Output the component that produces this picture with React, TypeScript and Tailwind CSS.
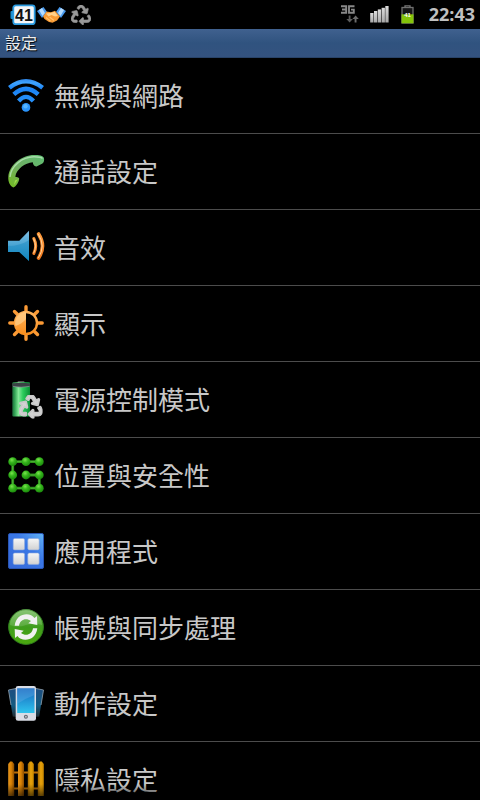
import type { ReactNode } from "react";
import { FaRecycle } from "react-icons/fa";

const FONT = "font-['Roboto','Noto_Sans_CJK_TC',sans-serif]";

function Gradient({ id, from, to }: { id: string; from: string; to: string }) {
  return (
    <linearGradient id={id} x1="0" y1="0" x2="0" y2="1">
      <stop offset="0" stopColor={from} />
      <stop offset="1" stopColor={to} />
    </linearGradient>
  );
}

function RowIcon({ children }: { children: ReactNode }) {
  return (
    <svg viewBox="0 0 36 36" className="size-9 shrink-0 overflow-visible" aria-hidden="true">
      {children}
    </svg>
  );
}

function WifiIcon() {
  return (
    <RowIcon>
      <defs>
        <linearGradient id="wifi" gradientUnits="userSpaceOnUse" x1="0" y1="2" x2="0" y2="35">
          <stop offset="0" stopColor="#2f86ea" />
          <stop offset="0.12" stopColor="#3fa4ff" />
          <stop offset="0.3" stopColor="#1b83f5" />
          <stop offset="1" stopColor="#2f9cff" />
        </linearGradient>
      </defs>
      <g fill="none" stroke="url(#wifi)" strokeWidth="4.4">
        <path d="M1.4 10.8Q18-2.2 34.6 10.8" />
        <path d="M5.8 17.4Q18 6.4 30.2 17.4" />
        <path d="M10.600 24Q18 15.800 25.400 24" />
      </g>
      <circle cx="18" cy="30.4" r="4.300" fill="#2a94fb" />
      <circle cx="17.5" cy="29.3" r="2.2" fill="#55b4ff" />
    </RowIcon>
  );
}

function PhoneIcon() {
  return (
    <RowIcon>
      <defs>
        <linearGradient id="call" x1="1" y1="0" x2="0" y2="1">
          <stop offset="0" stopColor="#5fbd72" />
          <stop offset="0.55" stopColor="#6fae63" />
          <stop offset="1" stopColor="#74bd1e" />
        </linearGradient>
      </defs>
      <path
        d="M5.3 34.5C2 33 0 29 .3 24C1 12 14 2 26 2C31 2 35 2.5 36 5C36.5 8 35.5 10 34 10.8L28.500 13.400C26 13.600 25 11.500 24.800 9.300C17 10 8.500 16 7.300 23.700C8.500 24 10.800 24 11.200 25.500C11.400 28 8 34 5.300 34.500Z"
        fill="url(#call)"
      />
      <path d="M2 24C3 13 14 4 26 3.800C30 3.800 33 4 34.500 5.500" fill="none" stroke="#b9e6ba" strokeWidth="1.4" opacity="0.8" />
      <path d="M7 27.500L9.800 26.200L6 32" fill="#a3e045" />
    </RowIcon>
  );
}

function SoundIcon() {
  return (
    <RowIcon>
      <defs>
        <Gradient id="speaker" from="#7fc0e6" to="#0f86bd" />
        <Gradient id="waves" from="#ff9a3c" to="#f07a20" />
      </defs>
      <path d="M0 11.700H11.300L21 1.700V32L11.300 23H0Z" fill="url(#speaker)" />
      <path d="M0 17C8 17 15 15 21 11V32L11.300 23H0Z" fill="#1687c0" opacity="0.45" />
      <g fill="none" strokeLinecap="round">
        <path d="M25.800 9.500Q29.600 17 25.800 24.500" stroke="url(#waves)" strokeWidth="3" />
        <path d="M30.600 5Q38.400 17 30.600 29" stroke="url(#waves)" strokeWidth="3.600" />
        <path d="M25.800 10Q29.200 17 25.800 24M30.600 5.500Q37.900 17 30.600 28.500" stroke="#ffd39a" strokeWidth="1" />
      </g>
    </RowIcon>
  );
}

function DisplayIcon() {
  return (
    <RowIcon>
      <defs>
        <Gradient id="sun" from="#ffb45c" to="#f98f1f" />
      </defs>
      <g stroke="#fb9a35" strokeWidth="3.4" strokeLinecap="round">
        <path d="M18 1.800V6M18 30V34.200M1.800 18H6M30 18H34.200M6.500 6.500L9.300 9.300M26.700 26.700L29.500 29.500M6.500 29.500L9.300 26.700M26.700 9.300L29.500 6.500" />
      </g>
      <circle cx="18" cy="18" r="11" fill="#000" stroke="url(#sun)" strokeWidth="2.4" />
      <path d="M18 7A11 11 0 0 0 18 29Z" fill="url(#sun)" />
      <path d="M18 7A11 11 0 0 0 7.500 21Q14 19 18 14Z" fill="#ffd08d" opacity="0.7" />
    </RowIcon>
  );
}

function PowerIcon() {
  return (
    <RowIcon>
      <defs>
        <linearGradient id="cell" x1="0" y1="0" x2="1" y2="0">
          <stop offset="0" stopColor="#1d6a3a" />
          <stop offset="0.15" stopColor="#35a657" />
          <stop offset="0.35" stopColor="#84e898" />
          <stop offset="0.6" stopColor="#2ccc5c" />
          <stop offset="1" stopColor="#0a8f35" />
        </linearGradient>
      </defs>
      <rect x="9.500" y="0" width="7" height="3" rx="1" fill="#555" />
      <rect x="4.300" y="1.300" width="17.700" height="34.200" rx="1" fill="url(#cell)" />
      <path d="M4.300 2.500Q13 .8 22 2.500V5.500Q13 7 4.300 5.500Z" fill="#3b4145" />
      <path d="M5 5.400Q13 7 21.500 5.400" fill="none" stroke="#9aa" strokeWidth="0.6" />
      <FaRecycle x="11" y="14" size={23.5} color="#d2d2d2" stroke="#c8c8c8" strokeWidth="36" />
    </RowIcon>
  );
}

const NODES = [
  [4.7, 4.7], [18, 4.7], [31.3, 4.7],
  [4.7, 18], [18, 18], [31.3, 18],
  [4.7, 31.2], [18, 31.2], [31.3, 31.2],
];

function SecurityIcon() {
  return (
    <RowIcon>
      <defs>
        <radialGradient id="node" cx="0.4" cy="0.3" r="0.7">
          <stop offset="0" stopColor="#7be34f" />
          <stop offset="0.45" stopColor="#35b51c" />
          <stop offset="1" stopColor="#1b8a0c" />
        </radialGradient>
      </defs>
      <path d="M31.300 4.700H4.700V31.200H31.300V18H18" fill="none" stroke="#2a8a18" strokeWidth="2.8" />
      <path d="M31.300 4.700H4.700V31.200H31.300V18H18" fill="none" stroke="#4fb838" strokeWidth="1" />
      {NODES.map(([cx, cy]) => (
        <circle key={`${cx}-${cy}`} cx={cx} cy={cy} r="4.400" fill="url(#node)" />
      ))}
    </RowIcon>
  );
}

function AppsIcon() {
  return (
    <RowIcon>
      <defs>
        <linearGradient id="apps" x1="0" y1="1" x2="1" y2="0">
          <stop offset="0" stopColor="#3568d8" />
          <stop offset="0.6" stopColor="#3a78e6" />
          <stop offset="1" stopColor="#62b4f4" />
        </linearGradient>
        <Gradient id="tile" from="#f6f6f6" to="#d2d2d2" />
      </defs>
      <rect x="0.500" y="0.500" width="35" height="35" rx="1.500" fill="url(#apps)" stroke="#2a56b4" />
      <g fill="url(#tile)" stroke="#8da9dd" strokeWidth="0.6">
        <rect x="5.200" y="5.500" width="11.400" height="11.400" rx="1.500" />
        <rect x="19.800" y="5.500" width="11.400" height="11.400" rx="1.500" />
        <rect x="5.200" y="20" width="11.400" height="11.400" rx="1.500" />
        <rect x="19.800" y="20" width="11.400" height="11.400" rx="1.500" />
      </g>
    </RowIcon>
  );
}

const SYNC_ARROW =
  "M6.700 16.700C7.500 9 13 5.200 18.500 5.200C22 5.200 24.800 6.500 26.500 9L29 7L29.300 16L20.300 14.300L23 12C18 8.300 12 10.500 11 16.700Z";

function SyncIcon() {
  return (
    <RowIcon>
      <defs>
        <linearGradient id="sync" x1="0" y1="0" x2="0" y2="1">
          <stop offset="0" stopColor="#7fc069" />
          <stop offset="0.5" stopColor="#3f9c1c" />
          <stop offset="1" stopColor="#4aa80e" />
        </linearGradient>
      </defs>
      <circle cx="18" cy="18" r="17.400" fill="url(#sync)" stroke="#2f7d1d" />
      <path d="M2 16A16 16 0 0 1 34 16Q26 13 18 16T2 16Z" fill="#a9d79c" opacity="0.25" />
      <path d={SYNC_ARROW} fill="#f1f1f1" />
      <path d={SYNC_ARROW} fill="#f1f1f1" transform="rotate(180 18 18)" />
    </RowIcon>
  );
}

function MotionIcon() {
  return (
    <RowIcon>
      <defs>
        <Gradient id="screen" from="#1766bd" to="#2fc4ee" />
        <linearGradient id="ghost" x1="0" y1="0" x2="0" y2="1">
          <stop offset="0" stopColor="#1f4e80" />
          <stop offset="0.6" stopColor="#135a80" />
          <stop offset="1" stopColor="#222c33" />
        </linearGradient>
      </defs>
      <path d="M.5 5L9 3.300V32L4.800 31.500Z" fill="url(#ghost)" />
      <path d="M35.500 5L27 3.300V32L31.200 31.500Z" fill="url(#ghost)" />
      <path d="M3 20L.5 5L9 3.300M33 20L35.500 5L27 3.300" fill="none" stroke="#8797a6" strokeWidth="0.900" />
      <rect x="7.700" y="1" width="20.300" height="34.700" rx="2.300" fill="#d9dde6" />
      <rect x="9.200" y="3.300" width="17.300" height="24.700" fill="url(#screen)" />
      <path d="M9.200 3.300H26.500V10Q18 13 9.200 19Z" fill="#6eb0e8" opacity="0.35" />
      <circle cx="17.900" cy="31.700" r="2" fill="#626872" />
      <rect x="17.100" y="30.900" width="1.600" height="1.600" fill="#c3c7cd" />
    </RowIcon>
  );
}

function PrivacyIcon() {
  return (
    <RowIcon>
      <defs>
        <linearGradient id="picket" x1="0" y1="0" x2="1" y2="0">
          <stop offset="0" stopColor="#e5941c" />
          <stop offset="0.5" stopColor="#d98205" />
          <stop offset="1" stopColor="#8a4c00" />
        </linearGradient>
        <linearGradient id="picketLight" x1="0" y1="0" x2="1" y2="0">
          <stop offset="0" stopColor="#a86b00" />
          <stop offset="0.5" stopColor="#e8a30b" />
          <stop offset="1" stopColor="#c78600" />
        </linearGradient>
      </defs>
      <path d="M3 11.500H33M3 27.500H33" stroke="#b96d06" strokeWidth="2.200" />
      {[0.2, 10, 19.8, 29.8].map((x, i) => (
        <path
          key={x}
          d={`M${x} 35V3L${x + 2} .6H${x + 4}L${x + 6} 3V35Z`}
          fill={i < 2 ? "url(#picket)" : "url(#picketLight)"}
        />
      ))}
    </RowIcon>
  );
}

const ITEMS = [
  { label: "無線與網路", Icon: WifiIcon },
  { label: "通話設定", Icon: PhoneIcon },
  { label: "音效", Icon: SoundIcon },
  { label: "顯示", Icon: DisplayIcon },
  { label: "電源控制模式", Icon: PowerIcon },
  { label: "位置與安全性", Icon: SecurityIcon },
  { label: "應用程式", Icon: AppsIcon },
  { label: "帳號與同步處理", Icon: SyncIcon },
  { label: "動作設定", Icon: MotionIcon },
  { label: "隱私設定", Icon: PrivacyIcon },
];

function ChargeBadge() {
  return (
    <svg viewBox="0 0 26 22" className="h-[22px] w-[26px]" role="img" aria-label="41%">
      <rect x="0.500" y="7" width="4" height="8" rx="1" fill="#1e8fd0" />
      <rect x="3.300" y="1.300" width="21.400" height="18.900" rx="2.500" fill="#f4f6f8" stroke="#2a9be0" strokeWidth="1.800" />
      <text x="14" y="16.500" textAnchor="middle" className="fill-[#111] font-['Liberation_Sans',sans-serif] text-[16px] font-bold">
        41
      </text>
    </svg>
  );
}

function Handshake() {
  return (
    <svg viewBox="0 0 29 18" className="h-[18px] w-[29px]" aria-hidden="true">
      <path d="M0 5L6.500 1L10 6L5 12Z" fill="#4a9bef" />
      <path d="M2 4L5 2L8 7L5.500 10Z" fill="#b5dcff" />
      <path d="M29 5L22.500 1L19 6L24 12Z" fill="#4a9bef" />
      <path d="M27 4L24 2L21 7L23.500 10Z" fill="#b5dcff" />
      <path d="M6 10.500L9.500 5.500L14 6.200L18 4.800L23 10.500L20 14.500L15.500 16.800L12 16L7.500 13Z" fill="#f79a35" />
      <path d="M9 7.500L13 7L17.500 5.800L21 10L18 10.500L14.500 9L11.500 10.500Z" fill="#ffd08a" />
      <path d="M9 11.500L13.500 15M12.500 11L17 14.500" stroke="#ffc06b" strokeWidth="1.200" />
    </svg>
  );
}

function NetworkIndicator() {
  return (
    <svg viewBox="0 0 20 20" className="size-5" role="img" aria-label="3G">
      <path d="M1 1.200H6.200V7.800H1M2 4.500H6M14.500 1.200H9V7.800H13.800V4.600H11" fill="none" stroke="#888" strokeWidth="1.900" />
      <path d="M8.700 10.500V14H6.300L9.600 17.500L12.900 14H10.500V10.500Z" fill="#5c5c5c" />
      <path d="M14.600 17.500V14H12.400L15.600 10.500L18.800 14H16.500V17.500Z" fill="#6c6c6c" />
    </svg>
  );
}

function SignalBars() {
  return (
    <svg viewBox="0 0 19 17" className="h-[17px] w-[19px]" aria-hidden="true">
      <defs>
        <Gradient id="bars" from="#dcdcdc" to="#a8a8a8" />
      </defs>
      <g fill="url(#bars)">
        <rect x="0.200" y="7" width="3.300" height="9.500" />
        <rect x="4" y="5" width="3.300" height="11.500" />
        <rect x="7.800" y="3.400" width="3.300" height="13.100" />
        <rect x="11.600" y="1.800" width="3.300" height="14.700" />
        <rect x="15.300" y="0" width="3.300" height="16.500" />
      </g>
    </svg>
  );
}

function BatteryStatus() {
  return (
    <svg viewBox="0 0 13 19" className="h-[19px] w-[13px]" role="img" aria-label="41%">
      <path d="M4 2V.8H9V2" fill="none" stroke="#777" strokeWidth="1.300" />
      <rect x="1" y="2.500" width="11" height="15.500" fill="#161616" stroke="#707070" strokeWidth="1.300" />
      <rect x="0.500" y="9.300" width="12" height="9" fill="#84c40a" />
      <text x="6.500" y="11.700" textAnchor="middle" className="fill-white font-['Liberation_Sans',sans-serif] text-[6px] font-bold">
        41
      </text>
    </svg>
  );
}

export default function App() {
  return (
    <div className={`flex h-screen flex-col overflow-hidden bg-black text-[#c8c8c8] ${FONT}`}>
      <header className="flex h-[29px] shrink-0 items-center justify-between pr-[5px] pl-[10px]">
        <div className="flex items-center gap-px">
          <ChargeBadge />
          <Handshake />
          <FaRecycle className="ml-1 size-5 text-[#999]" stroke="#999" strokeWidth="16" aria-hidden="true" />
        </div>
        <div className="flex items-center">
          <NetworkIndicator />
          <span className="ml-[10px]">
            <SignalBars />
          </span>
          <span className="ml-3">
            <BatteryStatus />
          </span>
          <time className="ml-[15px] font-['Open_Sans',sans-serif] text-[18px] leading-[29px] font-bold text-[#c0c0c0]">
            22:43
          </time>
        </div>
      </header>

      <h1 className="h-[29px] shrink-0 border-b border-[#294368] bg-linear-to-b from-[#40618f] via-[#30537f] to-[#34527f] px-[5px] pt-px text-[16px] leading-[28px] font-normal text-[#eee] [text-shadow:1px_1px_1px_#000]">
        設定
      </h1>

      <main className="relative min-h-0 flex-1 overflow-hidden">
        <ul>
          {ITEMS.map(({ label, Icon }) => (
            <li key={label} className="border-b border-[#4c4c4c]">
              <button type="button" className="flex h-[75px] w-full items-center gap-[10px] px-2 pb-px text-left">
                <Icon />
                <span className="pt-[3px] text-[26px] leading-9">{label}</span>
              </button>
            </li>
          ))}
        </ul>
        <div className="pointer-events-none absolute inset-x-0 bottom-0 h-4 bg-linear-to-b from-transparent to-black/80" />
      </main>
    </div>
  );
}
